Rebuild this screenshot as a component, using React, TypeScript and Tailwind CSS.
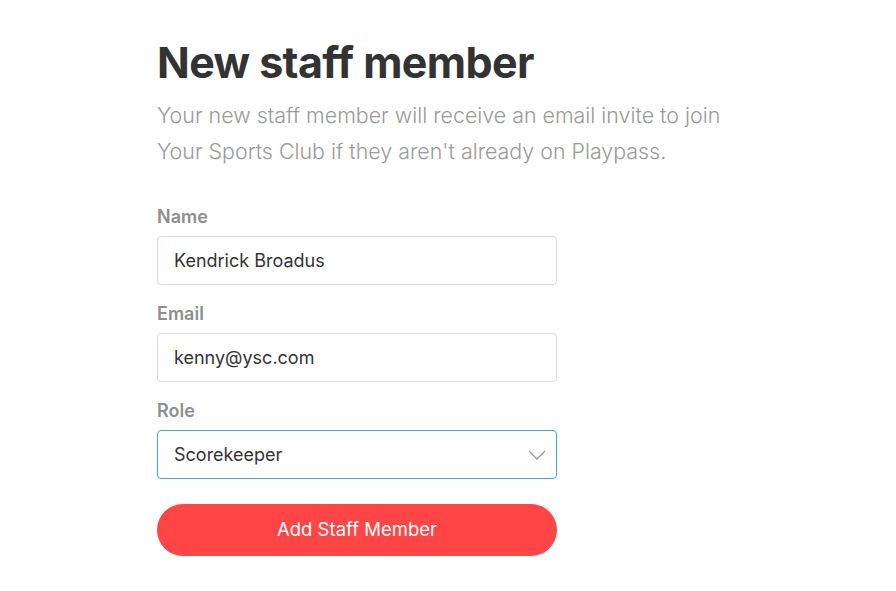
import React, { useState } from 'react';

const Field: React.FC<{ label: string; children: React.ReactNode }> = ({ label, children }) => (
  <div className="flex flex-col">
    <label className="text-[18px] leading-[22px] font-semibold text-[#8e8e8e] mb-[8px]">{label}</label>
    {children}
  </div>
);

const App: React.FC = () => {
  const [name, setName] = useState('Kendrick Broadus');
  const [email, setEmail] = useState('kenny@ysc.com');
  const [role, setRole] = useState('Scorekeeper');

  return (
    <div className="min-h-[591px] bg-white font-['Inter',sans-serif] text-[#333]">
      <div className="pl-[157px] pt-[36px]">
        <h1 className="text-[43px] leading-[52px] font-bold tracking-[-0.6px] text-[#333]">New staff member</h1>
        <p className="mt-[9px] w-[620px] text-[21.4px] leading-[36px] font-light text-[#9a9a9a]">
          Your new staff member will receive an email invite to join<br />
          Your Sports Club if they aren't already on Playpass.
        </p>

        <form className="mt-[37px] w-[400px] flex flex-col gap-[18px]" onSubmit={(e) => e.preventDefault()}>
          <Field label="Name">
            <input
              value={name}
              onChange={(e) => setName(e.target.value)}
              className="h-[49px] rounded-[4px] border border-[#dcdcdc] px-[16px] text-[18px] text-[#333] outline-none"
            />
          </Field>
          <Field label="Email">
            <input
              value={email}
              onChange={(e) => setEmail(e.target.value)}
              className="h-[49px] rounded-[4px] border border-[#dcdcdc] px-[16px] text-[18px] text-[#333] outline-none"
            />
          </Field>
          <Field label="Role">
            <div className="relative">
              <select
                value={role}
                onChange={(e) => setRole(e.target.value)}
                className="w-full h-[49px] appearance-none rounded-[4px] border border-[#4aa3f2] bg-white px-[16px] text-[18px] text-[#333] outline-none"
              >
                <option>Scorekeeper</option>
                <option>Coach</option>
                <option>Admin</option>
              </select>
              <svg className="pointer-events-none absolute right-[11px] top-[20px]" width="18" height="10" viewBox="0 0 18 10" fill="none">
                <path d="M1 1l8 8 8-8" stroke="#9a9a9a" strokeWidth="1.3" />
              </svg>
            </div>
          </Field>
          <button
            type="submit"
            className="mt-[7px] h-[52px] rounded-full bg-[#ff4545] text-white text-[18.5px] font-normal"
          >
            Add Staff Member
          </button>
        </form>
      </div>
    </div>
  );
};

export default App;
